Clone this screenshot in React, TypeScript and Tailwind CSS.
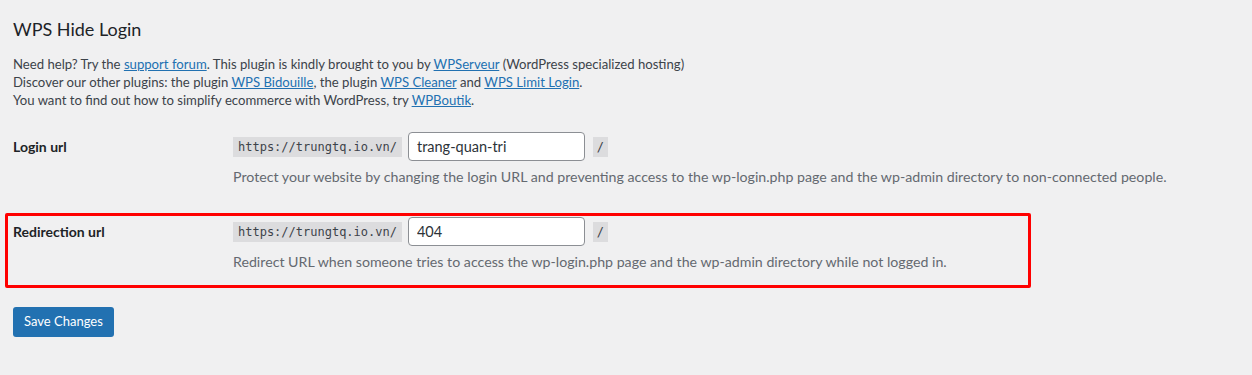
import React from 'react'

const font = { fontFamily: 'Lato, "Noto Sans", sans-serif' }

function UrlField({ value }: { value: string }) {
  return (
    <div className="flex items-center">
      <code className="bg-[#dcdcde] text-[#3c434a] px-[5px] h-[20px] leading-[20px] text-[12px] font-['DejaVu_Sans_Mono',monospace]">
        https://trungtq.io.vn/
      </code>
      <input
        defaultValue={value}
        className="ml-[6px] w-[177px] h-[29px] bg-white border border-[#8c8f94] rounded-[4px] px-[8px] text-[14.5px] text-[#2c3338] outline-none"
      />
      <code className="ml-[8px] bg-[#dcdcde] text-[#3c434a] w-[15px] text-center h-[20px] leading-[20px] text-[12px] font-['DejaVu_Sans_Mono',monospace]">
        /
      </code>
    </div>
  )
}

function Row({ label, value, desc, marked }: { label: string; value: string; desc: string; marked?: boolean }) {
  return (
    <div className="relative flex">
      {marked && (
        <div className="absolute left-[-8px] top-[-4px] w-[1026px] h-[75px] border-[3px] border-[#ff0000] rounded-[2px] pointer-events-none" />
      )}
      <div className="w-[220px] pt-[4px] text-[14px] font-bold text-[#1d2327]">{label}</div>
      <div>
        <UrlField value={value} />
        <p className="mt-[7px] text-[14.2px] text-[#646970] leading-[18px]">{desc}</p>
      </div>
    </div>
  )
}

export default function App() {
  return (
    <div className="min-h-[375px] bg-[#f0f0f1] pl-[13px] pt-[16px]" style={font}>
      <h1 className="text-[18px] text-[#1d2327] leading-[26px]">WPS Hide Login</h1>
      <div className="mt-[13px] text-[13.15px] leading-[18px] text-[#3c434a]">
        <p>
          Need help? Try the <a href="#" className="text-[#2271b1] underline">support forum</a>. This plugin is kindly brought to you by{' '}
          <a href="#" className="text-[#2271b1] underline">WPServeur</a> (WordPress specialized hosting)
        </p>
        <p>
          Discover our other plugins: the plugin <a href="#" className="text-[#2271b1] underline">WPS Bidouille</a>, the plugin{' '}
          <a href="#" className="text-[#2271b1] underline">WPS Cleaner</a> and{' '}
          <a href="#" className="text-[#2271b1] underline">WPS Limit Login</a>.
        </p>
        <p>
          You want to find out how to simplify ecommerce with WordPress, try{' '}
          <a href="#" className="text-[#2271b1] underline">WPBoutik</a>.
        </p>
      </div>
      <div className="mt-[23px] flex flex-col gap-[31px]">
        <Row
          label="Login url"
          value="trang-quan-tri"
          desc="Protect your website by changing the login URL and preventing access to the wp-login.php page and the wp-admin directory to non-connected people."
        />
        <Row
          marked
          label="Redirection url"
          value="404"
          desc="Redirect URL when someone tries to access the wp-login.php page and the wp-admin directory while not logged in."
        />
      </div>
      <button className="mt-[36px] bg-[#2271b1] text-white text-[13px] rounded-[3px] h-[30px] px-[11px] whitespace-nowrap">
        Save Changes
      </button>
    </div>
  )
}
